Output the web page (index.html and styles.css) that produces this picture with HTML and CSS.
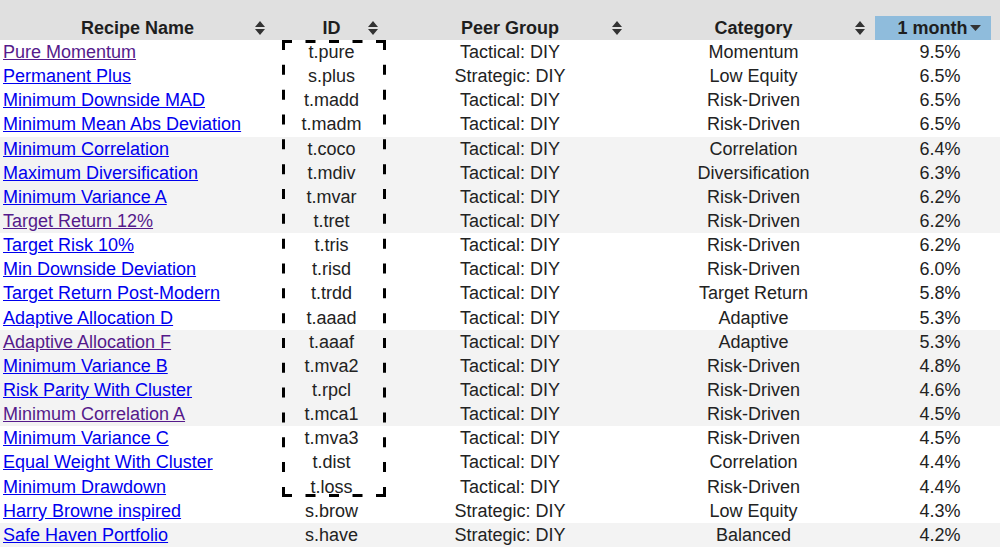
FILE: index.html
```html
<!DOCTYPE html>
<html>
<head>
<meta charset="utf-8">
<link rel="stylesheet" href="styles.css">
</head>
<body>
<div class="wrap">
  <div class="topbar"></div>
  <table class="grid">
    <colgroup>
      <col class="c-name"><col class="c-id"><col class="c-peer"><col class="c-cat"><col class="c-month">
    </colgroup>
    <thead>
      <tr>
        <th>Recipe Name<svg class="sort" viewBox="0 0 10 14"><path d="M0 6 L5 0 L10 6 Z M0 8 L10 8 L5 14 Z"/></svg></th>
        <th>ID<svg class="sort" viewBox="0 0 10 14"><path d="M0 6 L5 0 L10 6 Z M0 8 L10 8 L5 14 Z"/></svg></th>
        <th>Peer Group<svg class="sort" viewBox="0 0 10 14"><path d="M0 6 L5 0 L10 6 Z M0 8 L10 8 L5 14 Z"/></svg></th>
        <th>Category<svg class="sort" viewBox="0 0 10 14"><path d="M0 6 L5 0 L10 6 Z M0 8 L10 8 L5 14 Z"/></svg></th>
        <th class="active"><div class="active-box">1 month<svg class="desc" viewBox="0 0 11 6"><path d="M0 0 L11 0 L5.5 6 Z"/></svg></div></th>
      </tr>
    </thead>
    <tbody>
      <tr><td class="name"><a class="visited" href="#">Pure Momentum</a></td><td>t.pure</td><td>Tactical: DIY</td><td>Momentum</td><td class="pct">9.5%</td></tr>
      <tr><td class="name"><a href="#">Permanent Plus</a></td><td>s.plus</td><td>Strategic: DIY</td><td>Low Equity</td><td class="pct">6.5%</td></tr>
      <tr><td class="name"><a href="#">Minimum Downside MAD</a></td><td>t.madd</td><td>Tactical: DIY</td><td>Risk-Driven</td><td class="pct">6.5%</td></tr>
      <tr><td class="name"><a href="#">Minimum Mean Abs Deviation</a></td><td>t.madm</td><td>Tactical: DIY</td><td>Risk-Driven</td><td class="pct">6.5%</td></tr>
      <tr class="alt"><td class="name"><a href="#">Minimum Correlation</a></td><td>t.coco</td><td>Tactical: DIY</td><td>Correlation</td><td class="pct">6.4%</td></tr>
      <tr class="alt"><td class="name"><a href="#">Maximum Diversification</a></td><td>t.mdiv</td><td>Tactical: DIY</td><td>Diversification</td><td class="pct">6.3%</td></tr>
      <tr class="alt"><td class="name"><a href="#">Minimum Variance A</a></td><td>t.mvar</td><td>Tactical: DIY</td><td>Risk-Driven</td><td class="pct">6.2%</td></tr>
      <tr class="alt"><td class="name"><a class="visited" href="#">Target Return 12%</a></td><td>t.tret</td><td>Tactical: DIY</td><td>Risk-Driven</td><td class="pct">6.2%</td></tr>
      <tr><td class="name"><a href="#">Target Risk 10%</a></td><td>t.tris</td><td>Tactical: DIY</td><td>Risk-Driven</td><td class="pct">6.2%</td></tr>
      <tr><td class="name"><a href="#">Min Downside Deviation</a></td><td>t.risd</td><td>Tactical: DIY</td><td>Risk-Driven</td><td class="pct">6.0%</td></tr>
      <tr><td class="name"><a href="#">Target Return Post-Modern</a></td><td>t.trdd</td><td>Tactical: DIY</td><td>Target Return</td><td class="pct">5.8%</td></tr>
      <tr><td class="name"><a href="#">Adaptive Allocation D</a></td><td>t.aaad</td><td>Tactical: DIY</td><td>Adaptive</td><td class="pct">5.3%</td></tr>
      <tr class="alt"><td class="name"><a class="visited" href="#">Adaptive Allocation F</a></td><td>t.aaaf</td><td>Tactical: DIY</td><td>Adaptive</td><td class="pct">5.3%</td></tr>
      <tr class="alt"><td class="name"><a href="#">Minimum Variance B</a></td><td>t.mva2</td><td>Tactical: DIY</td><td>Risk-Driven</td><td class="pct">4.8%</td></tr>
      <tr class="alt"><td class="name"><a href="#">Risk Parity With Cluster</a></td><td>t.rpcl</td><td>Tactical: DIY</td><td>Risk-Driven</td><td class="pct">4.6%</td></tr>
      <tr class="alt"><td class="name"><a class="visited" href="#">Minimum Correlation A</a></td><td>t.mca1</td><td>Tactical: DIY</td><td>Risk-Driven</td><td class="pct">4.5%</td></tr>
      <tr><td class="name"><a href="#">Minimum Variance C</a></td><td>t.mva3</td><td>Tactical: DIY</td><td>Risk-Driven</td><td class="pct">4.5%</td></tr>
      <tr><td class="name"><a href="#">Equal Weight With Cluster</a></td><td>t.dist</td><td>Tactical: DIY</td><td>Correlation</td><td class="pct">4.4%</td></tr>
      <tr><td class="name"><a href="#">Minimum Drawdown</a></td><td>t.loss</td><td>Tactical: DIY</td><td>Risk-Driven</td><td class="pct">4.4%</td></tr>
      <tr><td class="name"><a href="#">Harry Browne inspired</a></td><td>s.brow</td><td>Strategic: DIY</td><td>Low Equity</td><td class="pct">4.3%</td></tr>
      <tr class="alt"><td class="name"><a href="#">Safe Haven Portfolio</a></td><td>s.have</td><td>Strategic: DIY</td><td>Balanced</td><td class="pct">4.2%</td></tr>
    </tbody>
  </table>
  <svg class="dashbox" width="104" height="457" viewBox="0 0 104 457">
    <g stroke="#000" stroke-width="3" fill="none">
      <line x1="0" y1="1.5" x2="104" y2="1.5" stroke-dasharray="10 13.5"/>
      <line x1="0" y1="455.5" x2="104" y2="455.5" stroke-dasharray="10 13.5"/>
      <line x1="1.5" y1="0" x2="1.5" y2="457" stroke-dasharray="10 14.83"/>
      <line x1="102.5" y1="0" x2="102.5" y2="457" stroke-dasharray="10 14.83"/>
    </g>
  </svg>
</div>
</body>
</html>
```

FILE: styles.css
```css
html, body {
  margin: 0;
  padding: 0;
  background: #ffffff;
}

body {
  font-family: "Liberation Sans", Arial, sans-serif;
  font-size: 18px;
  color: #222222;
}

.wrap {
  position: relative;
  width: 1000px;
}

.topbar {
  height: 16px;
  background: #e0e0e0;
}

.grid {
  width: 1000px;
  table-layout: fixed;
  border-collapse: collapse;
  border-spacing: 0;
}

.c-name { width: 275px; }
.c-id { width: 113px; }
.c-peer { width: 244px; }
.c-cat { width: 243px; }
.c-month { width: 125px; }

.grid th {
  position: relative;
  height: 24px;
  padding: 0;
  background: #e0e0e0;
  font-weight: bold;
  text-align: center;
  line-height: 24px;
  color: #1e1e1e;
}

.sort {
  position: absolute;
  right: 10px;
  top: 5px;
  width: 10px;
  height: 14px;
  fill: #333333;
}

.grid th.active {
  text-align: left;
}

.active-box {
  margin-right: 9px;
  height: 24px;
  padding-left: 12px;
  background: #8fbcdc;
  display: flex;
  align-items: center;
  justify-content: center;
  gap: 2px;
}

.desc {
  width: 11px;
  height: 6px;
  fill: #333333;
}

.grid td {
  height: 24.15px;
  padding: 0;
  line-height: 22px;
  text-align: center;
  white-space: nowrap;
}

.grid tr.alt td {
  background: #f3f3f3;
}

.grid td.name {
  text-align: left;
  padding-left: 3px;
}

.grid td.pct {
  padding-left: 5px;
}

.grid a {
  color: #0000ee;
  text-decoration: underline;
}

.grid a.visited {
  color: #551a8b;
}

.dashbox {
  position: absolute;
  left: 282px;
  top: 40px;
}
```
